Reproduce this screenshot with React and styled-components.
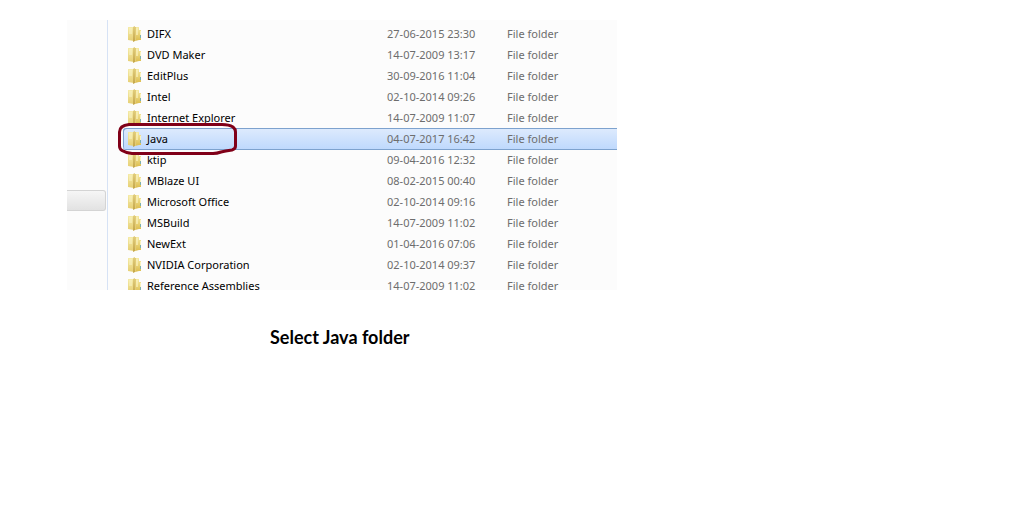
import React from "react";
import styled, { createGlobalStyle, css } from "styled-components";

const GlobalStyle = createGlobalStyle`
  * { box-sizing: border-box; }
  body { margin: 0; background: #fff; color: #000; font-family: "Noto Sans", "Open Sans", sans-serif; }
`;

const Page = styled.main`
  padding: 20px max(0px, calc(100% - 617px)) 20px 67px;
`;

const Figure = styled.figure`
  margin: 0;
`;

const Explorer = styled.div`
  display: flex;
  height: 270px;
  overflow: hidden;
  background: #fcfcfc;
`;

const NavPane = styled.nav`
  flex: 0 0 41px;
  padding: 170px 1px 0 0;
  border-right: 1px solid #d6e2f5;
`;

const NavSelection = styled.div`
  height: 21px;
  border: 1px solid #d4d4d4;
  border-left: 0;
  border-radius: 0 3px 3px 0;
  background: linear-gradient(#f6f6f6, #e2e2e2);
`;

const FilePane = styled.div`
  flex: 1;
  min-width: 0;
  padding: 3px 0 0 15px;
`;

const FileTable = styled.table`
  width: 100%;
  table-layout: fixed;
  border-spacing: 0;
  font-size: 11px;
  line-height: 21px;
`;

const Column = styled.col`
  width: ${(p) => p.$width};
`;

const Cell = styled.td`
  height: 21px;
  padding: 0;
  color: #6d6d6d;
  white-space: nowrap;
`;

const NameCell = styled(Cell)`
  padding-left: 5px;
  color: #000;
`;

const Row = styled.tr`
  ${(p) =>
    p.$selected &&
    css`
      ${Cell} {
        background: linear-gradient(#deebfd, #bfd9fd);
        box-shadow: inset 0 1px #7da2ce, 0 1px #7da2ce;
      }
      ${NameCell} {
        border-radius: 3px 0 0 3px;
        box-shadow: inset 1px 1px #7da2ce, 0 1px #7da2ce;
      }
    `}
`;

const Name = styled.div`
  position: relative;
  display: flex;
  align-items: center;
  gap: 5px;
  height: 21px;
`;

const Marker = styled.svg`
  position: absolute;
  top: -6px;
  left: -11px;
  z-index: 1;
`;

const Caption = styled.figcaption`
  padding: 34px 0 0 203px;
  font: bold 18px/26px Lato, "Open Sans", sans-serif;
`;

function FolderIcon() {
  return (
    <svg width="14" height="16" viewBox="0 0 14 16" aria-hidden="true">
      <defs>
        <linearGradient id="back" x2="0" y2="1">
          <stop offset="0" stopColor="#f5eba8" />
          <stop offset="1" stopColor="#e6cf74" />
        </linearGradient>
        <linearGradient id="flap" x2="0" y2="1">
          <stop offset="0" stopColor="#f6eba6" />
          <stop offset="1" stopColor="#dcbc4c" />
        </linearGradient>
        <linearGradient id="fold" x2="0" y2="1">
          <stop offset="0" stopColor="#e2cf80" />
          <stop offset="1" stopColor="#c4a548" />
        </linearGradient>
      </defs>
      <path d="M0 1h6v14L0 14z" fill="url(#back)" />
      <path d="M7 1h4v3h2v10h-2l-4 1z" fill="url(#flap)" />
      <path d="M5 1l2-1v15l-2 1z" fill="url(#fold)" />
      <path d="M7 1h1v14H7z" fill="#e3cc76" />
      <path d="M1 2h3v6H1z" fill="#f9f2bf" opacity=".6" />
      <path d="M8 2h2v7H8z" fill="#fbf5c4" opacity=".6" />
      <path d="M12 5h1v4h-1z" fill="#faf2bd" />
      <path d="M12 9h1v3h-1z" fill="#7fb0ae" />
    </svg>
  );
}

function HandDrawnMarker() {
  return (
    <Marker width="121" height="34" viewBox="0 0 121 34" aria-hidden="true">
      <path
        d="M12 2.500H105Q112 2.500 116 5Q118.500 7 118.500 10V24Q118.500 27 115 28Q108 29 104 30Q100 31.500 96 31.500H15Q9 31 5 28.500Q2.500 27 2.500 24V10Q2.500 3.500 12 2.500Z"
        fill="none"
        stroke="#800018"
        strokeWidth="3"
        strokeLinejoin="round"
      />
    </Marker>
  );
}

const files = [
  ["DIFX", "27-06-2015 23:30"],
  ["DVD Maker", "14-07-2009 13:17"],
  ["EditPlus", "30-09-2016 11:04"],
  ["Intel", "02-10-2014 09:26"],
  ["Internet Explorer", "14-07-2009 11:07"],
  ["Java", "04-07-2017 16:42"],
  ["ktip", "09-04-2016 12:32"],
  ["MBlaze UI", "08-02-2015 00:40"],
  ["Microsoft Office", "02-10-2014 09:16"],
  ["MSBuild", "14-07-2009 11:02"],
  ["NewExt", "01-04-2016 07:06"],
  ["NVIDIA Corporation", "02-10-2014 09:37"],
  ["Reference Assemblies", "14-07-2009 11:02"],
];

export default function App() {
  return (
    <Page>
      <GlobalStyle />
      <Figure>
        <Explorer>
          <NavPane>
            <NavSelection />
          </NavPane>
          <FilePane>
            <FileTable>
              <colgroup>
                <Column $width="264px" />
                <Column $width="120px" />
                <Column $width="auto" />
              </colgroup>
              <tbody>
                {files.map(([name, date]) => (
                  <Row key={name} $selected={name === "Java"}>
                    <NameCell>
                      <Name>
                        <FolderIcon />
                        {name}
                        {name === "Java" && <HandDrawnMarker />}
                      </Name>
                    </NameCell>
                    <Cell>{date}</Cell>
                    <Cell>File folder</Cell>
                  </Row>
                ))}
              </tbody>
            </FileTable>
          </FilePane>
        </Explorer>
        <Caption>Select Java folder</Caption>
      </Figure>
    </Page>
  );
}
